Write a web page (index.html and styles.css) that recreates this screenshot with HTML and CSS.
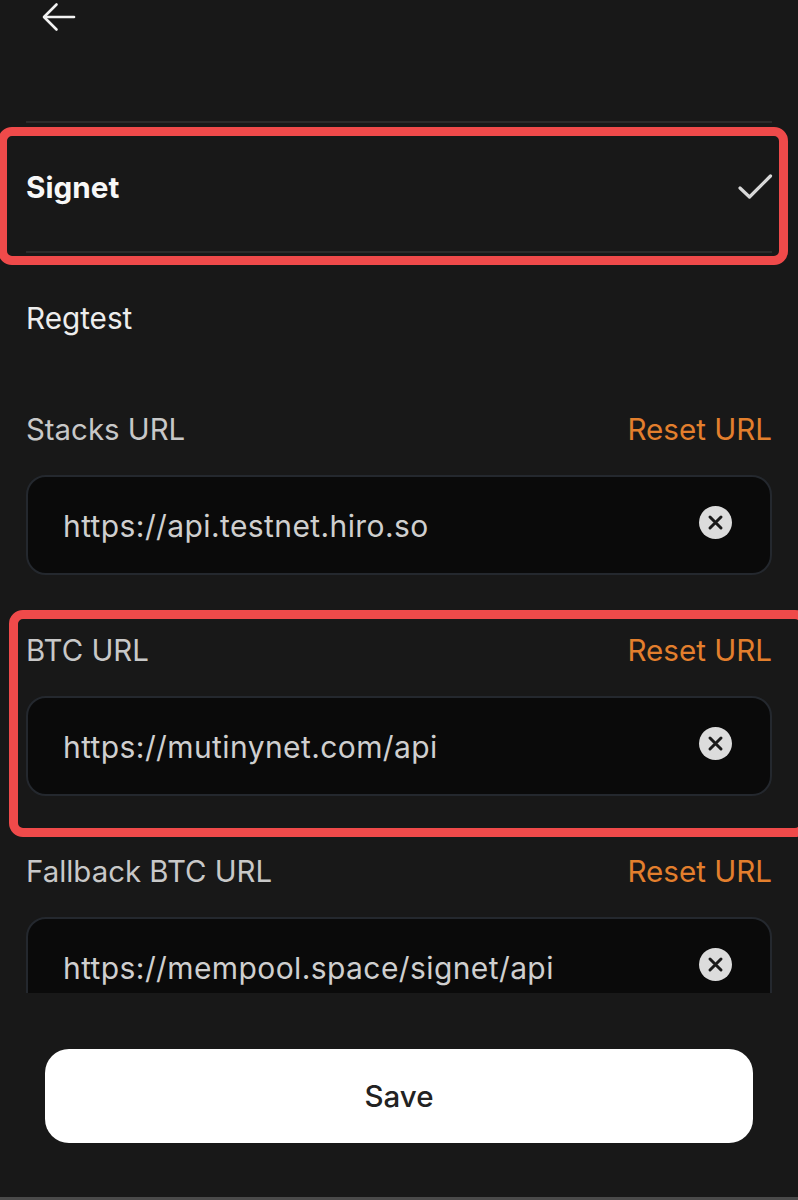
FILE: index.html
```html
<!DOCTYPE html>
<html lang="en">
<head>
    <meta charset="UTF-8">
    <meta name="viewport" content="width=device-width, initial-scale=1.0">
    <title>Network settings</title>
    <link rel="stylesheet" href="styles.css">
</head>
<body>

    <div class="page">
        <header class="top-bar">
            <svg class="back-icon" width="36" height="30" viewBox="0 0 36 30" fill="none" stroke="#f2f2f2" stroke-width="2.6" stroke-linecap="round" stroke-linejoin="round">
                <path d="M33 15H3.500"/>
                <path d="M15.500 2.500L3 15l12.500 12.500"/>
            </svg>
        </header>

        <main class="scroll-area">
            <div class="network-row selected">
                <span class="network-name">Signet</span>
                <svg class="check-icon" width="36" height="28" viewBox="0 0 36 28" fill="none" stroke="#d8d8d8" stroke-width="3.200" stroke-linecap="round" stroke-linejoin="round">
                    <path d="M3 15l9.500 9L33.500 3"/>
                </svg>
            </div>
            <div class="network-row plain">
                <span class="network-name">Regtest</span>
            </div>

            <div class="field">
                <div class="field-head">
                    <span class="field-label">Stacks URL</span>
                    <span class="reset-link">Reset URL</span>
                </div>
                <div class="url-input">
                    <span class="url-text">https://api.testnet.hiro.so</span>
                    <svg class="clear-icon" width="33" height="33" viewBox="0 0 33 33">
                        <circle cx="16.500" cy="16.500" r="16.500" fill="#dcdcdc"/>
                        <path d="M11 11l11 11M22 11L11 22" stroke="#1a1a1a" stroke-width="3" stroke-linecap="round"/>
                    </svg>
                </div>
            </div>

            <div class="field">
                <div class="field-head">
                    <span class="field-label">BTC URL</span>
                    <span class="reset-link">Reset URL</span>
                </div>
                <div class="url-input">
                    <span class="url-text">https://mutinynet.com/api</span>
                    <svg class="clear-icon" width="33" height="33" viewBox="0 0 33 33">
                        <circle cx="16.500" cy="16.500" r="16.500" fill="#dcdcdc"/>
                        <path d="M11 11l11 11M22 11L11 22" stroke="#1a1a1a" stroke-width="3" stroke-linecap="round"/>
                    </svg>
                </div>
            </div>

            <div class="field">
                <div class="field-head">
                    <span class="field-label">Fallback BTC URL</span>
                    <span class="reset-link">Reset URL</span>
                </div>
                <div class="url-input">
                    <span class="url-text">https://mempool.space/signet/api</span>
                    <svg class="clear-icon" width="33" height="33" viewBox="0 0 33 33">
                        <circle cx="16.500" cy="16.500" r="16.500" fill="#dcdcdc"/>
                        <path d="M11 11l11 11M22 11L11 22" stroke="#1a1a1a" stroke-width="3" stroke-linecap="round"/>
                    </svg>
                </div>
            </div>
        </main>

        <footer class="save-bar">
            <button class="save-button">Save</button>
        </footer>

        <!-- red annotation boxes drawn over the screenshot -->
        <div class="highlight highlight-network"></div>
        <div class="highlight highlight-btc"></div>
    </div>

</body>
</html>
```

FILE: styles.css
```css
body {
    font-family: "Inter", "Liberation Sans", sans-serif;
    background-color: #181818;
    margin: 0;
    padding: 0;
}
.page {
    position: relative;
    width: 798px;
    height: 1200px;
    overflow: hidden;
    display: flex;
    flex-direction: column;
    box-sizing: border-box;
    border-bottom: 3px solid #4a4a4a;
}
.top-bar {
    height: 121px;
    flex-shrink: 0;
    padding-left: 41px;
}
.back-icon {
    display: block;
    margin-top: 2px;
}
.scroll-area {
    height: 872px;
    flex-shrink: 0;
    overflow: hidden;
    padding: 0 26px;
}
.network-row {
    box-sizing: border-box;
    display: flex;
    align-items: center;
    justify-content: space-between;
}
.network-row.selected {
    height: 132px;
    border-top: 2px solid #2b2b2b;
    border-bottom: 2px solid #2b2b2b;
}
.network-row.plain {
    height: 128px;
    padding-top: 2px;
}
.network-name {
    font-size: 29.7px;
    color: #ededed;
}
.selected .network-name {
    font-weight: 700;
    color: #f7f7f7;
}
.check-icon {
    margin-right: -1px;
}
.field {
    margin-bottom: 53px;
}
.network-row + .field {
    margin-top: 26px;
}
.field-head {
    height: 40px;
    box-sizing: border-box;
    padding-top: 4px;
    display: flex;
    align-items: center;
    justify-content: space-between;
    margin-bottom: 28px;
}
.field-label {
    font-size: 29.4px;
    color: #c8c8c8;
}
.reset-link {
    font-size: 29.6px;
    color: #e37f2d;
}
.url-input {
    height: 100px;
    box-sizing: border-box;
    background-color: #0a0a0a;
    border: 2px solid #24282e;
    border-radius: 20px;
    display: flex;
    align-items: center;
    justify-content: space-between;
    padding: 0 38px 0 35px;
}
.url-text {
    font-size: 30px;
    letter-spacing: 0.4px;
    color: #cfcfcf;
    padding-top: 2px;
}
.clear-icon {
    margin-bottom: 6px;
}
.save-bar {
    padding: 56px 45px 0;
}
.save-button {
    display: block;
    width: 100%;
    height: 94px;
    background-color: white;
    color: #222222;
    border: none;
    border-radius: 24px;
    font-family: inherit;
    font-size: 29.5px;
    font-weight: 500;
}
.highlight {
    position: absolute;
    box-sizing: border-box;
    border: 9px solid #ef4a4a;
    border-radius: 14px;
}
.highlight-network {
    left: -2px;
    top: 127px;
    width: 790px;
    height: 138px;
}
.highlight-btc {
    left: 9px;
    top: 610px;
    width: 800px;
    height: 227px;
}
```
